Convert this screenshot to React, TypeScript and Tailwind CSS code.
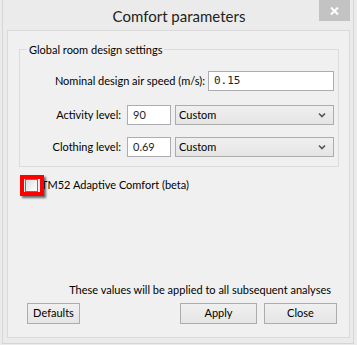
const font = { fontFamily: 'Lato, "Noto Sans", sans-serif' };

function Chevron() {
  return (
    <svg width="8" height="6" viewBox="0 0 8 6" className="text-[#555]">
      <path d="M1 1.5 L4 4.5 L7 1.5" fill="none" stroke="currentColor" strokeWidth="1.6" />
    </svg>
  );
}

function Combo({ value }: { value: string }) {
  return (
    <div className="flex h-[20px] w-[159px] items-center justify-between border border-[#acacac] bg-gradient-to-b from-[#f0f0f0] to-[#e5e5e5] pl-[3px] pr-[7px]">
      <span className="text-[11px] text-black">{value}</span>
      <Chevron />
    </div>
  );
}

function Field({ value, w, mono }: { value: string; w: string; mono?: boolean }) {
  return (
    <div
      className={`flex h-[20px] items-center border border-[#abadb3] bg-white pl-[5px] text-[11px] ${w}`}
      style={mono ? { fontFamily: '"DejaVu Sans Mono", monospace', fontSize: '11px' } : undefined}
    >
      {value}
    </div>
  );
}

function Button({ label, w }: { label: string; w: string }) {
  return (
    <button
      className={`flex h-[21px] items-center justify-center border border-[#acacac] bg-gradient-to-b from-[#f0f0f0] to-[#e5e5e5] text-[11px] text-black ${w}`}
    >
      {label}
    </button>
  );
}

export default function App() {
  return (
    <div className="h-[345px] w-[357px] overflow-hidden bg-[#ebebeb] text-[#1e1e1e]" style={font}>
      <div className="ml-[2px] flex h-[344px] w-[352px] flex-col border-x border-b border-[#d6d6d6]">
        {/* Title bar */}
        <div className="relative flex h-[30px] items-center justify-center">
          <span className="pl-[2px] pt-[2px] text-[15px] text-[#222]">Comfort parameters</span>
          <div className="absolute left-[316px] top-0 flex h-[21px] w-[31px] items-center justify-center bg-[#c3c3c3]">
            <svg width="9" height="8" viewBox="0 0 9 8">
              <path d="M1 0.5 L8 7.5 M8 0.5 L1 7.5" stroke="white" strokeWidth="2" />
            </svg>
          </div>
        </div>

        {/* Client area */}
        <div className="ml-[4px] flex h-[308px] w-[343px] flex-col border border-[#dadada] bg-[#f0f0f0]">
          {/* Group box */}
          <div className="relative ml-[11px] mt-[18px] flex h-[118px] w-[320px] flex-col border border-[#dcdcdc] pb-[9px] pr-[4px] pt-[21px]">
            <span className="absolute -top-[8px] left-[7px] bg-[#f0f0f0] px-[2px] text-[11px] text-black">
              Global room design settings
            </span>

            <div className="flex items-center justify-end">
              <span className="text-[11px] text-black">Nominal design air speed (m/s):</span>
              <div className="ml-[3px]">
                <Field value="0.15" w="w-[126px]" mono />
              </div>
            </div>

            <div className="mt-[14px] flex items-center justify-end">
              <span className="text-[11px] text-black">Activity level:</span>
              <div className="ml-[6px]">
                <Field value="90" w="w-[44px]" />
              </div>
              <div className="ml-[4px]">
                <Combo value="Custom" />
              </div>
            </div>

            <div className="mt-[12px] flex items-center justify-end">
              <span className="text-[11px] text-black">Clothing level:</span>
              <div className="ml-[6px]">
                <Field value="0.69" w="w-[44px]" />
              </div>
              <div className="ml-[4px]">
                <Combo value="Custom" />
              </div>
            </div>
          </div>

          {/* TM52 checkbox */}
          <div className="relative ml-[17px] mt-[12px] flex h-[13px] items-center">
            <div className="h-[13px] w-[13px] border border-[#707070] bg-gradient-to-br from-[#dedede] to-white" />
            <span className="ml-[3px] text-[11px] text-black">TM52 Adaptive Comfort (beta)</span>
            <div className="absolute -left-[5px] -top-[4px] h-[21px] w-[24px] border-[4px] border-[#ff0000] shadow-[2px_2px_2px_rgba(0,0,0,0.55)]" />
          </div>

          <div className="flex-1" />

          {/* Footer */}
          <div className="flex justify-end pr-[18px]">
            <span className="text-[11px] leading-[16px] text-black">
              These values will be applied to all subsequent analyses
            </span>
          </div>
          <div className="mt-[5px] flex items-center pb-[13px] pl-[19px] pr-[12px]">
            <Button label="Defaults" w="w-[53px]" />
            <div className="flex-1" />
            <Button label="Apply" w="w-[77px]" />
            <div className="ml-[7px]">
              <Button label="Close" w="w-[73px]" />
            </div>
          </div>
        </div>
      </div>
    </div>
  );
}
